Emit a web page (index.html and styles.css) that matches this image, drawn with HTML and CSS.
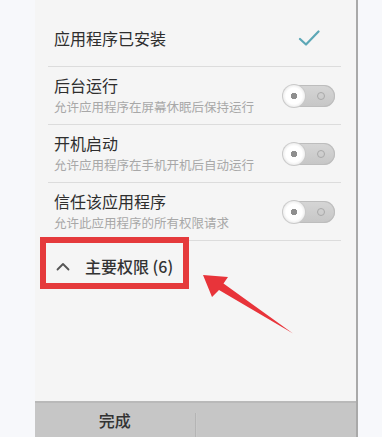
FILE: index.html
```html
<!DOCTYPE html>
<html lang="zh">
<head>
<meta charset="utf-8">
<link rel="stylesheet" href="styles.css">
</head>
<body>
<div class="screen">
  <div class="panel">
    <div class="list">
      <div class="row row-first">
        <span class="title">应用程序已安装</span>
        <svg class="check" width="22" height="18" viewBox="0 0 22 18"><path d="M2 10 L8 15.5 L20.5 2.5" fill="none" stroke="#5ca7b6" stroke-width="2.2" stroke-linecap="round" stroke-linejoin="round"/></svg>
      </div>
      <div class="divider"></div>
      <div class="row">
        <div class="texts">
          <span class="title">后台运行</span>
          <span class="sub">允许应用程序在屏幕休眠后保持运行</span>
        </div>
        <div class="toggle"><span class="knob"></span><span class="ring"></span></div>
      </div>
      <div class="divider"></div>
      <div class="row">
        <div class="texts">
          <span class="title">开机启动</span>
          <span class="sub">允许应用程序在手机开机后自动运行</span>
        </div>
        <div class="toggle"><span class="knob"></span><span class="ring"></span></div>
      </div>
      <div class="divider"></div>
      <div class="row">
        <div class="texts">
          <span class="title">信任该应用程序</span>
          <span class="sub">允许此应用程序的所有权限请求</span>
        </div>
        <div class="toggle"><span class="knob"></span><span class="ring"></span></div>
      </div>
      <div class="divider"></div>
      <div class="section">
        <svg class="chev" width="14" height="9" viewBox="0 0 14 9"><path d="M1.5 7.5 L7 2 L12.5 7.5" fill="none" stroke="#555" stroke-width="1.8" stroke-linecap="round" stroke-linejoin="round"/></svg>
        <span class="section-title">主要权限 (6)</span>
      </div>
    </div>
    <div class="bottom">
      <div class="btn">完成</div>
      <div class="btn-sep"></div>
      <div class="btn"></div>
    </div>
  </div>
  <div class="highlight"></div>
  <svg class="arrow" width="382" height="437" viewBox="0 0 382 437">
    <polygon points="203,275 228,277 223.5,283.5 293,333.5 219,290 212,297" fill="#e8343a"/>
  </svg>
</div>
</body>
</html>
```

FILE: styles.css
```css
html, body {
  margin: 0;
  padding: 0;
}
body {
  background: #f7f8fb;
  font-family: "Noto Sans CJK SC", "Noto Sans", sans-serif;
  color: #2e2e2e;
}
.screen {
  position: relative;
  width: 382px;
  height: 437px;
  overflow: hidden;
}
.panel {
  margin-left: 35px;
  width: 321px;
  height: 437px;
  background: #f5f5f5;
  border-right: 2px solid #a9a9a9;
  display: flex;
  flex-direction: column;
}
.list {
  flex: 1;
  display: flex;
  flex-direction: column;
}
.row {
  height: 57px;
  display: flex;
  align-items: center;
  justify-content: space-between;
  padding: 0 21px 0 19px;
  box-sizing: border-box;
}
.row-first {
  height: 66px;
  padding-top: 10px;
  padding-right: 36px;
}
.texts {
  display: flex;
  flex-direction: column;
  gap: 4px;
  padding-bottom: 1px;
}
.title {
  font-size: 16px;
  line-height: 19px;
  color: #2e2e2e;
}
.sub {
  font-size: 12.5px;
  line-height: 16px;
  color: #a8a8a8;
}
.check {
  display: block;
}
.divider {
  height: 1px;
  background: #dcdcdc;
  margin: 0 15px 0 13px;
}
.toggle {
  width: 52px;
  height: 22px;
  border-radius: 11px;
  background: linear-gradient(#d6d6d6, #c6c6c6);
  box-shadow: inset 0 0 0 1px #bdbdbd;
  display: flex;
  align-items: center;
  justify-content: space-between;
  padding-right: 10px;
  box-sizing: border-box;
}
.knob {
  width: 22px;
  height: 22px;
  border-radius: 50%;
  background: radial-gradient(circle, #8f8f8f 0 3px, #ffffff 3.5px 8px, #eeeeee 11px);
  box-shadow: 0 0 0 1px #c9c9c9;
}
.ring {
  width: 8px;
  height: 8px;
  border-radius: 50%;
  border: 1.5px solid #a9a9a9;
  box-sizing: border-box;
}
.section {
  height: 50px;
  display: flex;
  align-items: center;
  padding-left: 21px;
}
.chev {
  display: block;
  margin-right: 15px;
}
.section-title {
  font-size: 16px;
  font-weight: 500;
  color: #333;
}
.bottom {
  height: 36px;
  background: #c6c6c6;
  border-top: 2px solid #b9b9b9;
  box-sizing: border-box;
  display: flex;
  align-items: stretch;
}
.btn {
  flex: 1;
  display: flex;
  align-items: center;
  justify-content: center;
  font-size: 16px;
  font-weight: 500;
  color: #333;
}
.btn-sep {
  width: 2px;
  margin-top: 10px;
  background: linear-gradient(90deg, #aaaaaa, #d4d4d4);
}
.highlight {
  position: absolute;
  left: 40px;
  top: 237px;
  width: 149px;
  height: 52px;
  border: 6px solid #e53a3c;
  box-sizing: border-box;
}
.arrow {
  position: absolute;
  left: 0;
  top: 0;
}
```
